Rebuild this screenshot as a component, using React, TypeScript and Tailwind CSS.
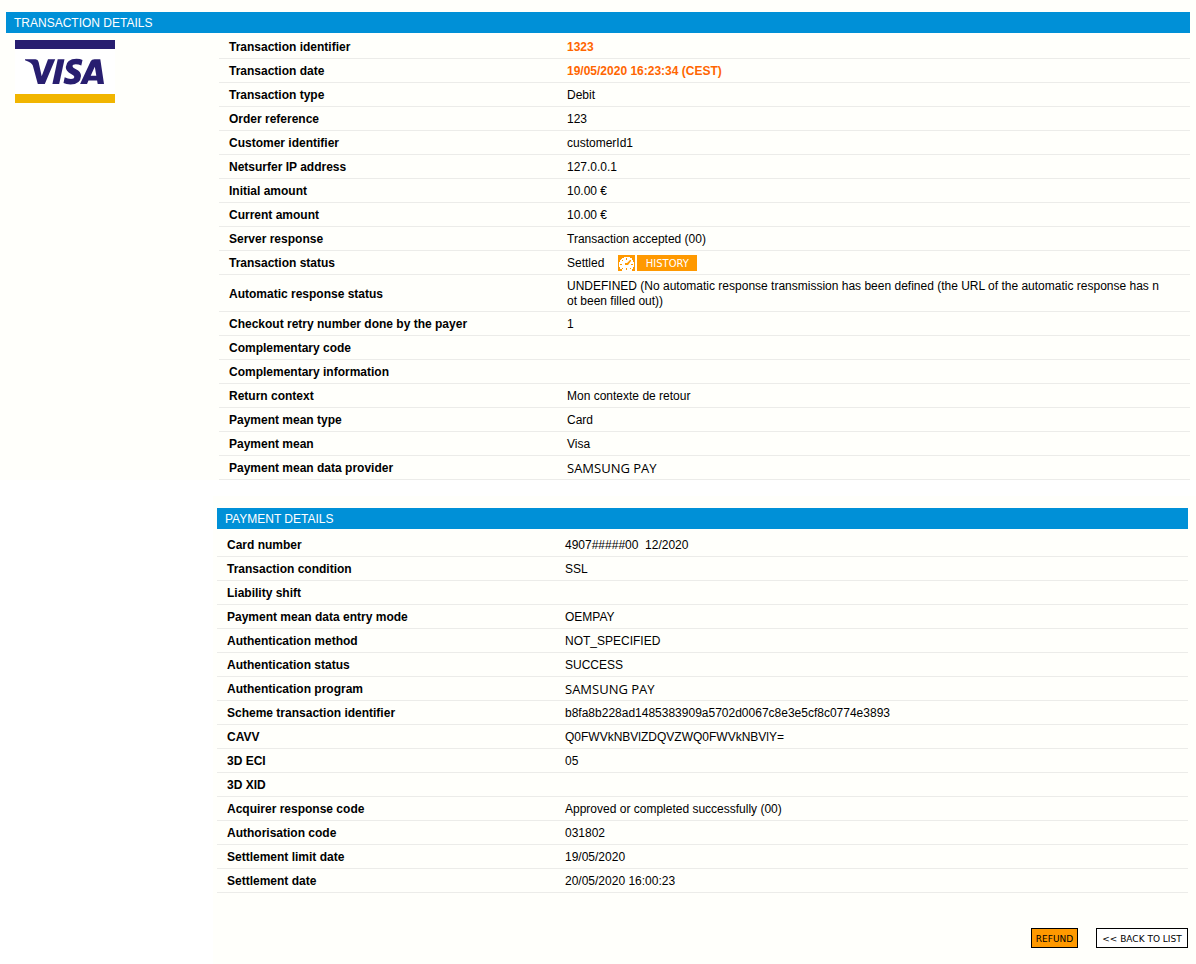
import React from "react";

type Row = { label: string; value?: React.ReactNode };

const alt = "font-['Open_Sans',sans-serif] text-[13px]";

function ClockIcon() {
  return (
    <svg viewBox="0 0 17 16" className="h-4 w-[17px] bg-[#ff9900]" aria-hidden="true">
      <path d="M6 2h6v1h2v2h1v2h1v5h-1v2h-1v2H4v-2H2v-2H1V7h1V5h1V4h1V3h2Z" fill="#fff" />
      <g fill="#ff9900">
        <path d="M8 3h1v2H8ZM4 5h1v1H4ZM2 9h2v1H2ZM13 9h2v1h-2ZM4 13h1v1H4ZM8 13h1v2H8ZM12 13h1v1h-1Z" />
        <path d="M7 8h2l3-3h1v1l-3 4H7Z" />
      </g>
    </svg>
  );
}

function VisaLogo() {
  return (
    <svg viewBox="0 0 100 63" className="h-[63px] w-[100px]" role="img" aria-label="Visa">
      <rect width="100" height="63" fill="#fff" />
      <rect width="100" height="9" fill="#281e70" />
      <rect y="54" width="100" height="9" fill="#f1b500" />
      <g fill="#281e70">
        <path d="M10 19.3H20.5Q23 19.3 23.6 22L26.7 36.2L33 19.3H40.2L29.8 44H22.8L17.8 25.5Q17 22.6 10 20.2Z" />
        <path d="M42.7 19.3H49.5L44.2 44H37.4Z" />
        <path d="M67.5 20L66.3 25.6Q63.5 24.3 60.7 24.3Q57.6 24.3 57.5 26.2Q57.5 27.5 61 29.2Q66 31.6 66 35.9Q65.5 44.4 55.5 44.4Q51 44.4 48.5 43.1L49.7 37.2Q53 39 56 39Q59.2 39 59.3 36.8Q59.3 35.4 56.1 33.9Q50.7 31.3 50.8 27.1Q51.4 19 61.5 18.8Q65.2 18.8 67.5 20Z" />
        <path fillRule="evenodd" d="M79.5 19.3H85.3L89 44H82.7L82.1 40.5H73.5L72 44H65.1L75.7 21.3Q76.7 19.3 79.5 19.3ZM79.8 26.7L75.7 35.7H81.3Z" />
      </g>
    </svg>
  );
}

const transaction: Row[] = [
  { label: "Transaction identifier", value: <strong className="text-[#ff6600]">1323</strong> },
  { label: "Transaction date", value: <strong className="text-[#ff6600]">19/05/2020 16:23:34 (CEST)</strong> },
  { label: "Transaction type", value: "Debit" },
  { label: "Order reference", value: "123" },
  { label: "Customer identifier", value: "customerId1" },
  { label: "Netsurfer IP address", value: "127.0.0.1" },
  { label: "Initial amount", value: "10.00 €" },
  { label: "Current amount", value: "10.00 €" },
  { label: "Server response", value: "Transaction accepted (00)" },
  {
    label: "Transaction status",
    value: (
      <div className="flex items-center gap-[14px]">
        <span>Settled</span>
        <button type="button" className="-mt-[2px] flex h-4 gap-[2px] text-white">
          <ClockIcon />
          <span className="flex h-4 w-[60px] items-center justify-center bg-[#ff9900] pt-px font-['DejaVu_Sans',sans-serif] text-[10px]">HISTORY</span>
        </button>
      </div>
    ),
  },
  {
    label: "Automatic response status",
    value:
      "UNDEFINED (No automatic response transmission has been defined (the URL of the automatic response has not been filled out))",
  },
  { label: "Checkout retry number done by the payer", value: "1" },
  { label: "Complementary code" },
  { label: "Complementary information" },
  { label: "Return context", value: "Mon contexte de retour" },
  { label: "Payment mean type", value: "Card" },
  { label: "Payment mean", value: "Visa" },
  { label: "Payment mean data provider", value: <span className={alt}>SAMSUNG PAY</span> },
];

const payment: Row[] = [
  { label: "Card number", value: "4907#####00\u00a0 12/2020" },
  { label: "Transaction condition", value: "SSL" },
  { label: "Liability shift" },
  { label: "Payment mean data entry mode", value: "OEMPAY" },
  { label: "Authentication method", value: "NOT_SPECIFIED" },
  { label: "Authentication status", value: "SUCCESS" },
  { label: "Authentication program", value: <span className={alt}>SAMSUNG PAY</span> },
  { label: "Scheme transaction identifier", value: "b8fa8b228ad1485383909a5702d0067c8e3e5cf8c0774e3893" },
  { label: "CAVV", value: "Q0FWVkNBVlZDQVZWQ0FWVkNBVlY=" },
  { label: "3D ECI", value: "05" },
  { label: "3D XID" },
  { label: "Acquirer response code", value: "Approved or completed successfully (00)" },
  { label: "Authorisation code", value: "031802" },
  { label: "Settlement limit date", value: "19/05/2020" },
  { label: "Settlement date", value: "20/05/2020 16:00:23" },
];

function Details({ rows }: { rows: Row[] }) {
  return (
    <table className="w-full table-fixed border-separate border-spacing-0">
      <tbody>
        {rows.map((row) => (
          <tr key={row.label} className="h-6">
            <th scope="row" className="w-[338px] border-b border-[#ecece9] pt-1 pb-[2px] pl-[10px] text-left align-middle font-bold">
              {row.label}
            </th>
            <td className="border-b border-[#ecece9] pt-1 pr-[26px] pb-[2px] pl-[10px] align-middle break-all">{row.value}</td>
          </tr>
        ))}
      </tbody>
    </table>
  );
}

function Heading({ children }: { children: React.ReactNode }) {
  return <h2 className="bg-[#0090d7] px-2 pt-1 pb-[2px] font-normal text-white">{children}</h2>;
}

export default function App() {
  return (
    <main className="min-h-screen bg-white font-['Liberation_Sans',Arial,sans-serif] text-[12px] leading-[15px] text-black">
      <section className="bg-[#fffffb] pt-3 pr-[6px] pl-[6px]">
        <Heading>TRANSACTION DETAILS</Heading>
        <div className="flex pt-[2px]">
          <div className="w-[213px] shrink-0 pt-[5px] pl-[9px]">
            <VisaLogo />
          </div>
          <div className="min-w-0 grow">
            <Details rows={transaction} />
          </div>
        </div>
      </section>
      <section className="mt-4 ml-[213px] bg-[#fffffb] pt-3 pr-2 pb-4 pl-1">
        <Heading>PAYMENT DETAILS</Heading>
        <div className="pt-1">
          <Details rows={payment} />
        </div>
        <div className="mt-[35px] flex justify-end gap-[18px] font-['DejaVu_Sans',sans-serif] text-[9px]">
          <button type="button" className="h-5 w-[47px] border border-black bg-[#ff9900] pt-[2px]">REFUND</button>
          <button type="button" className="h-5 w-[92px] border border-black bg-white pt-[2px]">&lt;&lt; BACK TO LIST</button>
        </div>
      </section>
    </main>
  );
}
